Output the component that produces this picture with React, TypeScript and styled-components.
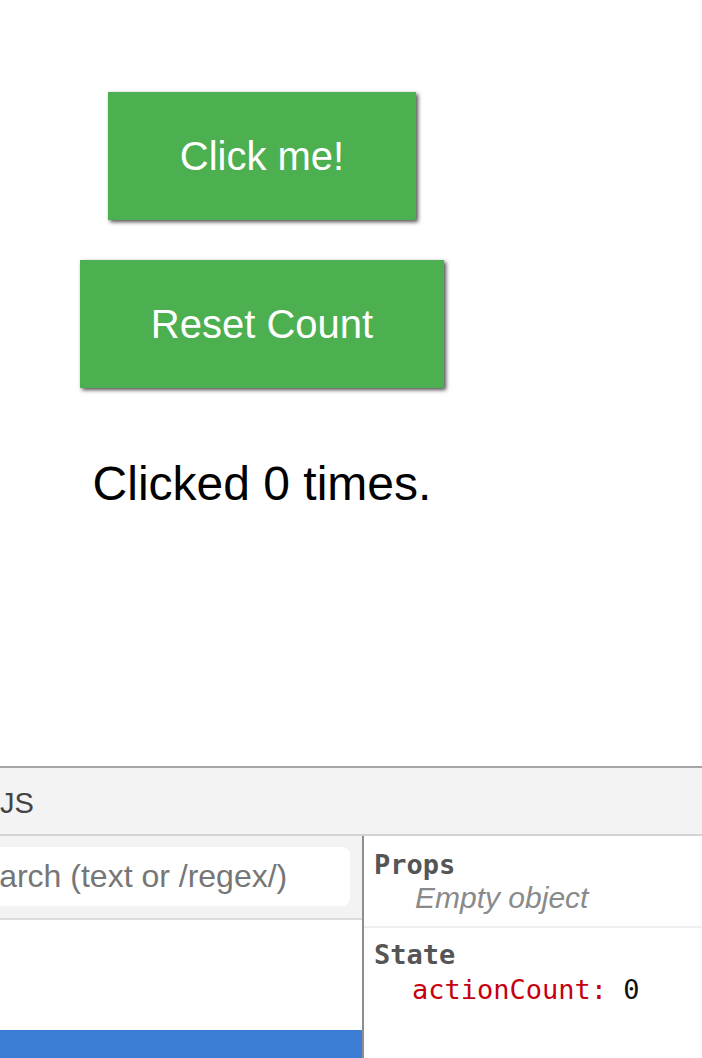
import React, { useState } from "react";
import styled, { createGlobalStyle } from "styled-components";

const GlobalStyle = createGlobalStyle`
  html, body {
    margin: 0;
    padding: 0;
    background: #ffffff;
    overflow: hidden;
  }
  * { box-sizing: border-box; }
`;

const Page = styled.div`
  display: flex;
  flex-direction: column;
  height: 1058px;
  width: 702px;
  overflow: hidden;
  font-family: "Liberation Sans", Arial, sans-serif;
`;

const AppArea = styled.div`
  height: 766px;
  flex-shrink: 0;
`;

const AppColumn = styled.div`
  width: 524px;
  display: flex;
  flex-direction: column;
  align-items: center;
  gap: 40px;
  padding-top: 92px;
`;

const GreenButton = styled.button<{ $pad: number }>`
  height: 128px;
  padding: 0 ${(p) => p.$pad}px;
  border: none;
  border-radius: 0;
  background: #4caf50;
  color: #ffffff;
  font-family: "Liberation Sans", Arial, sans-serif;
  font-size: 40px;
  box-shadow: 2px 2px 4px rgba(0, 0, 0, 0.7);
  cursor: pointer;
`;

const Counter = styled.p`
  margin: 28px 0 0;
  font-size: 48px;
  line-height: 56px;
  color: #000000;
`;

const DevTools = styled.div`
  flex: 1;
  display: flex;
  flex-direction: column;
  border-top: 2px solid #a5a5a5;
  min-height: 0;
`;

const Header = styled.div`
  height: 68px;
  flex-shrink: 0;
  display: flex;
  align-items: center;
  padding-top: 4px;
  background: #f3f3f3;
  border-bottom: 2px solid #d3d3d3;
  font-size: 29px;
  color: #444444;
`;

const Body = styled.div`
  flex: 1;
  display: flex;
  min-height: 0;
  overflow: hidden;
`;

const LeftPane = styled.div`
  width: 364px;
  flex-shrink: 0;
  display: flex;
  flex-direction: column;
  border-right: 2px solid #8e8e8e;
`;

const SearchBar = styled.div`
  height: 84px;
  flex-shrink: 0;
  padding: 11px 12px 0 0;
  background: #f3f3f3;
  border-bottom: 2px solid #dcdcdc;
`;

const SearchBox = styled.div`
  height: 59px;
  margin-left: -60px;
  padding-left: 20px;
  display: flex;
  align-items: center;
  background: #ffffff;
  border-radius: 8px;
  font-size: 32px;
  color: #767676;
  white-space: nowrap;
  overflow: hidden;
`;

const Tree = styled.div`
  flex: 1;
  padding-top: 110px;
  background: #ffffff;
`;

const TreeRow = styled.div<{ $selected?: boolean }>`
  height: 40px;
  background: ${(p) => (p.$selected ? "#3c7dd6" : "transparent")};
`;

const RightPane = styled.div`
  flex: 1;
  background: #ffffff;
`;

const Section = styled.div<{ $top: number; $bottom: number; $divider?: boolean }>`
  padding: ${(p) => p.$top}px 10px ${(p) => p.$bottom}px 10px;
  border-bottom: ${(p) => (p.$divider ? "2px solid #efefef" : "none")};
`;

const SectionTitle = styled.div`
  font-family: "DejaVu Sans Mono", "Liberation Mono", monospace;
  font-weight: bold;
  font-size: 27px;
  line-height: 33px;
  color: #555555;
`;

const EmptyNote = styled.div`
  padding-left: 41px;
  font-style: italic;
  font-size: 30px;
  line-height: 33px;
  color: #8a8a8a;
`;

const PropLine = styled.div`
  margin-top: 2px;
  padding-left: 38px;
  font-family: "DejaVu Sans Mono", "Liberation Mono", monospace;
  font-size: 27px;
  line-height: 33px;
  white-space: nowrap;
`;

const PropKey = styled.span`
  color: #c5000f;
`;

const PropValue = styled.span`
  color: #111111;
`;

export default function App() {
  const [count, setCount] = useState(0);
  return (
    <>
      <GlobalStyle />
      <Page>
        <AppArea>
          <AppColumn>
            <GreenButton $pad={72} onClick={() => setCount((c) => c + 1)}>
              Click me!
            </GreenButton>
            <GreenButton $pad={71} onClick={() => setCount(0)}>
              Reset Count
            </GreenButton>
            <Counter>Clicked {count} times.</Counter>
          </AppColumn>
        </AppArea>
        <DevTools>
          <Header>JS</Header>
          <Body>
            <LeftPane>
              <SearchBar>
                <SearchBox>Search (text or /regex/)</SearchBox>
              </SearchBar>
              <Tree>
                <TreeRow $selected />
              </Tree>
            </LeftPane>
            <RightPane>
              <Section $top={12} $bottom={12} $divider>
                <SectionTitle>Props</SectionTitle>
                <EmptyNote>Empty object</EmptyNote>
              </Section>
              <Section $top={10} $bottom={10}>
                <SectionTitle>State</SectionTitle>
                <PropLine>
                  <PropKey>actionCount:</PropKey> <PropValue>{count}</PropValue>
                </PropLine>
              </Section>
            </RightPane>
          </Body>
        </DevTools>
      </Page>
    </>
  );
}
